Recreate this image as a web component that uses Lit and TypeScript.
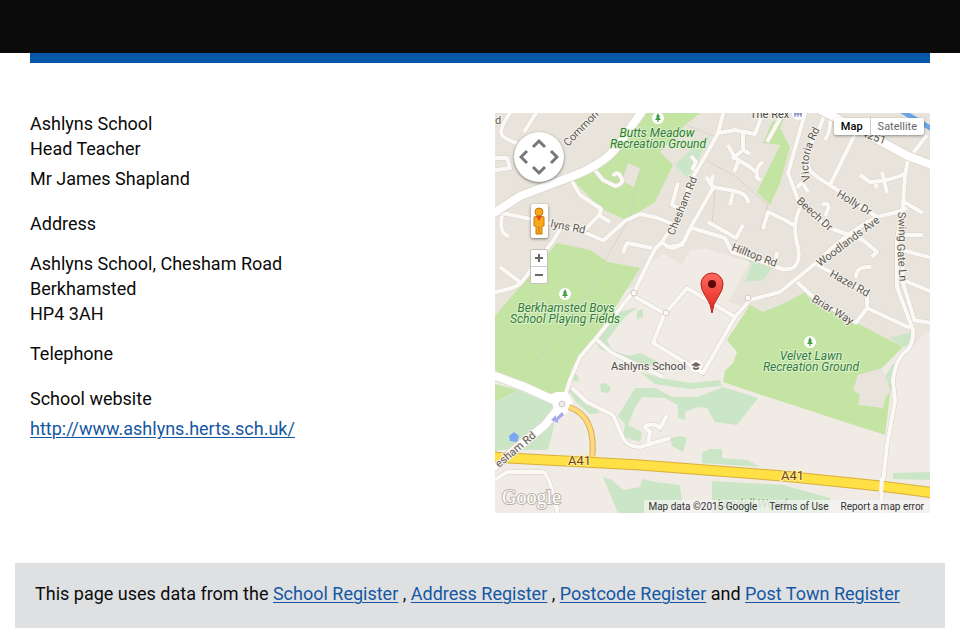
import { LitElement, html, svg, css } from "lit";
import { customElement } from "lit/decorators.js";

const PARKS = [
  "495,316 557,243 590,250 608,262 640,268 597,337 580,357 568,388 560,402 545,396 525,386 495,373",
  "495,384 518,390 495,402",
  "640,113 655,113 700,113 685,125 660,152 673,165 655,202 642,210 628,221 600,208 570,177 593,168 613,150 632,128",
  "772,122 785,117 780,128 790,147 780,183 770,205 757,192 780,145 763,143",
  "750,305 763,312 785,303 805,292 808,297 857,323 903,347 877,373 893,380 890,395 885,435 780,401 723,382 725,371 733,363 737,352 727,340",
];

const WOODS = [
  "518,390 556,406 553,431 548,450 500,450 495,452 495,402",
  "675,165 698,143 710,135 702,152 690,175 687,178",
  "738,253 747,258 757,262 772,268 763,280 745,282 752,264",
  "635,388 655,388 672,397 697,397 723,387 758,398 737,425 715,422 707,408 697,407 685,412 685,420 678,418 678,405 665,398 642,397 635,408 628,425 642,432 640,442 623,437 625,424 618,416",
  "568,390 573,388 593,404 600,413 590,414 576,402",
  "600,384 606,383 611,388 608,393 601,392",
  "638,307 625,317 607,340 612,351 630,356 640,353 665,365 662,368 635,362 600,349 596,342 620,312",
  "637,311 643,309 643,317 637,320",
  "670,438 680,436 687,438 683,452 672,446",
  "702,453 710,449 722,449 722,458 748,460 760,467 702,463",
  "603,477 612,480 623,490 640,487 642,479 655,482 680,485 682,502 660,513 618,513",
  "712,481 783,485 830,498 830,513 712,513",
  "893,473 930,472 930,480 893,479",
  "890,338 912,332 913,343 903,347",
  "883,380 892,365 902,355 895,370 890,385",
  "640,372 660,378 690,383 720,380 722,386 690,389 655,384",
  "570,368 578,376 580,382 570,380",
];

const LANES = [
  "M524 132L538 110M512 110Q498 130 502 135T517 143M490 158H507L510 168L490 171",
  "M570 178L580 195L601 209L600 214L583 232L545 222L507 214L490 213M600 216L610 222M584 232L604 241",
  "M502 215Q500 228 503 232T509 236M562 226L553 241L521 283Q515 289 490 293M500 267L521 283",
  "M593 168L603 180L615 186Q625 184 621 177T613 176",
  "M724 110L718 133L710 148L693 177L676 220L662 242L655 249L635 290L597 337L580 357L570 380L563 402",
  "M718 133L735 130L755 134L764 110M743 132V150L732 159M743 150L750 154",
  "M728 145L735 158L750 167L757 173V178L761 180M757 171Q758 164 763 162M738 162L734 172",
  "M691 156L696 162L692 170M706 177L713 187L735 191Q748 194 748 203M713 175L711 184M713 188L692 225L682 245L668 247L662 242M733 193L730 205",
  "M692 228L725 238L732 252L760 261L785 270M708 222L736 238L743 225M775 264L777 252",
  "M767 142L781 117M763 229L768 212L785 220L795 226",
  "M826 110L820 127Q803 155 809 168Q812 175 830 185L877 217L897 212L907 208",
  "M806 110L788 173L800 205L830 228L863 240L877 252L872 257M862 120L830 185M797 188L802 182L808 192M800 208Q792 225 797 243T793 268Q785 271 775 267",
  "M822 205Q833 200 825 216M877 217Q850 230 817 262L780 292L750 300L735 317L703 373L653 343L664 315L687 288L735 317M664 313L635 297M817 265L833 273L867 293V308L856 323M797 282L813 297L857 323M867 308L910 328",
  "M856 278Q855 266 871 267M830 110Q832 130 825 140M860 175L870 182Q892 181 906 173M882 172L887 193M875 182L877 188",
  "M927 135L908 160L905 175L903 205L897 240V287L913 330Q914 345 905 352T893 380L895 402L887 445L881 502L883 515",
  "M902 248L903 283L915 322M904 202L923 213M900 235H923M903 280L932 292M913 320L932 323M902 250L932 258",
  "M597 340L612 353L663 377M572 388L587 402L613 415L623 438Q627 447 640 447L670 438M648 445L650 431Q641 427 648 425T660 428L667 415",
  "M490 483L507 472H543Q550 475 558 515M623 253L627 243L652 248M668 247Q678 250 686 239",
  "M603 241L625 221L640 214L658 218L675 225M678 183L672 205L683 210M900 130L909 135",
];

interface Label { t: string; x: number; y: number; r: number; }
const STREETS: Label[] = [
  { t: "Common", x: 568, y: 147, r: -46 },
  { t: "lyns Rd", x: 550, y: 227, r: 11 },
  { t: "Chesham Rd", x: 674, y: 236, r: -68 },
  { t: "Hilltop Rd", x: 731, y: 250, r: 21 },
  { t: "Beech Dr", x: 796, y: 202, r: 42 },
  { t: "Holly Dr", x: 836, y: 196, r: 31 },
  { t: "Woodlands Ave", x: 820, y: 267, r: -37 },
  { t: "Hazel Rd", x: 829, y: 276, r: 29 },
  { t: "Briar Way", x: 811, y: 301, r: 31 },
  { t: "Swing", x: 898, y: 212, r: 88 },
  { t: "Gate Ln", x: 897, y: 244, r: 86 },
  { t: "esham Rd", x: 499, y: 468, r: -40 },
  { t: "4251", x: 861, y: 136, r: 20 },
  { t: "d", x: 495, y: 124, r: 0 },
];

@customElement("area-map")
export class AreaMap extends LitElement {
  static styles = css`
    :host { display: block; position: relative; height: 400px; overflow: hidden;
      font: 11px/14px Roboto, "Liberation Sans", sans-serif; }
    .canvas { display: block; width: 100%; height: 100%; }
    .home { fill: #e9e4db; }
    .park { fill: #c3e4a3; }
    .wood { fill: #cbe6c6; }
    .edge { fill: none; stroke: #d8d1c7; stroke-width: 5; }
    .lane { fill: none; stroke: #fbf9f5; stroke-width: 4; stroke-linejoin: round; }
    .trail { fill: none; stroke: #d2cbc0; stroke-width: 1; opacity: .7; }
    .main-edge { fill: none; stroke: #dfd9cf; stroke-width: 10; }
    .main { fill: none; stroke: #fff; stroke-width: 8; }
    .trunk-edge { fill: none; stroke: #d9ae3b; stroke-width: 11; }
    .trunk { fill: none; stroke: #ffe045; stroke-width: 9; }
    .street { fill: #5d5850; font-size: 11px; stroke: #f6f3ee; stroke-width: 2; paint-order: stroke; }
    .green { fill: #2f7d3b; font-size: 12px; font-style: italic; text-anchor: middle;
      stroke: #dff0cc; stroke-width: 2; paint-order: stroke; }
    .place { fill: #4a4744; font-size: 11px; stroke: #f6f3ee; stroke-width: 2; paint-order: stroke; }
    .route { fill: #744010; font-size: 13px; stroke: #fff0a0; stroke-width: 2; paint-order: stroke; }
    .brand { fill: #fff; font: 20px "Liberation Serif", serif; stroke: #b9b4ac; stroke-width: 2; paint-order: stroke; }
    .tools { position: absolute; left: 19px; top: 19px; display: flex; flex-direction: column; align-items: center; }
    button { display: block; margin: 0; padding: 0; border: 0; background: #fff; font: inherit; color: #666; }
    .pan { width: 50px; height: 50px; border-radius: 50%; box-shadow: 0 1px 3px rgb(0 0 0 / .5); }
    .person { width: 17px; height: 34px; margin-top: 22px; border-radius: 2px; box-shadow: 0 1px 3px rgb(0 0 0 / .5); }
    .zoom { display: flex; flex-direction: column; gap: 1px; margin-top: 11px; background: #ccc;
      border-radius: 2px; overflow: hidden; border: 1px solid #c4c0ba; }
    .zoom button { width: 16px; height: 16px; }
    .pan svg, .person svg, .zoom svg { display: block; margin: auto; }
    .kinds { position: absolute; top: 5px; right: 6px; display: flex; border-radius: 2px;
      box-shadow: 0 1px 3px rgb(0 0 0 / .4); background: #fff; }
    .kinds button { height: 17px; padding: 0 7px; background: none; }
    .kinds .on { color: #000; font-weight: 500; border-right: 1px solid #ccc; }
    .credit { position: absolute; right: 0; bottom: 0; display: flex; gap: 12px; height: 13px; line-height: 13px;
      padding: 0 6px 0 4px; background: rgb(245 245 245 / .7); font-size: 10px; color: #333; }
    .credit a { color: inherit; text-decoration: none; }
  `;

  render() {
    return html`
      <svg class="canvas" viewBox="495 113 435 400" preserveAspectRatio="xMidYMid slice" role="img" aria-label="Map of Ashlyns School">
        <rect x="495" y="113" width="435" height="400" fill="#f0ebe4" />
        <path class="home" d="M495 113H930V330Q920 336 914 346L903 347L857 323L763 312L728 302L750 262L735 258L718 252L705 248L690 250L682 265L663 253L646 267L638 285L600 300L495 320Z" />
        ${PARKS.map((p) => svg`<polygon class="park" points=${p} />`)}
        ${WOODS.map((p) => svg`<polygon class="wood" points=${p} />`)}
        <path class="home" d="M628 163L640 168L634 187L622 181ZM858 375L853 390L860 395L858 405L883 408L885 398L891 391L882 368Z" />
        <path class="trail" d="M608 262L570 320L522 378M640 172L628 221L604 262M687 125L716 137M707 161L735 176L768 205L760 230M715 190L712 225" />
        <path class="edge" d=${LANES.join("")} />
        <path class="lane" d=${LANES.join("")} />
        <path class="main-edge" d="M488 217L520 196L565 179Q602 166 616 148L646 106M812 106L856 128L908 156L935 166M490 374L525 387L562 404L545 425L490 470" />
        <path class="main" d="M488 217L520 196L565 179Q602 166 616 148L646 106M812 106L856 128L908 156L935 166M490 374L525 387L562 404L545 425L490 470" />
        <path d="M545 397L556 392H567L573 402L567 413L553 420L553 405Z" fill="#fff" />
        <path d="M900 110L932 129" fill="none" stroke="#6ba4ea" stroke-width="5" />
        <path d="M569 407Q597 416 592 460" fill="none" stroke="#d6ac58" stroke-width="6" />
        <path d="M569 407Q597 416 592 460" fill="none" stroke="#ffda7c" stroke-width="4" />
        <path d="M586 461L592 454L606 461Z" fill="#ffda7c" />
        <path class="trunk-edge" d="M490 457L640 465L783 476L880 486L935 493" />
        <path class="trunk" d="M490 457L640 465L783 476L880 486L935 493" />
        <path d="M882 478L881 493" stroke="#fbf9f5" stroke-width="4" />
        <path d="M551 420L556 415L556 418L562 412L564 415L558 420L558 423Z" fill="#a5a8ea" />
        <path d="M509 436L514 432L519 436L517 442L510 441Z" fill="#79a7f4" />
        <circle cx="562" cy="404" r="3" fill="#f0ebe4" stroke="#d0cac0" />
        <g fill="#fbf9f5" stroke="#d3ccc2"><circle cx="748" cy="298" r="3" /><circle cx="666" cy="313" r="3" /><circle cx="634" cy="293" r="3" /></g>
        ${[[658, 118], [565, 294], [810, 342]].map(([x, y]) => svg`
          <circle cx=${x} cy=${y} r="6" fill="#fff" />
          <path transform="translate(${x} ${y})" d="M0-5L-2-1H-1L-3 2H-.6V4H.6V2H3L1-1H2Z" fill="#43a047" />`)}
        <text class="green" x="657" y="137">Butts Meadow</text>
        <text class="green" x="658" y="148">Recreation Ground</text>
        <text class="green" x="566" y="312">Berkhamsted Boys</text>
        <text class="green" x="565" y="323">School Playing Fields</text>
        <text class="green" x="811" y="360">Velvet Lawn</text>
        <text class="green" x="811" y="371">Recreation Ground</text>
        <text class="green" x="752" y="508" opacity=".6">Loadell Wood</text>
        ${STREETS.map((l) => svg`<text class="street" transform="translate(${l.x} ${l.y}) rotate(${l.r})">${l.t}</text>`)}
        <path id="victoria" d="M811 180Q802 160 823 124" fill="none" />
        <text class="street"><textPath href="#victoria">Victoria Rd</textPath></text>
        <text class="place" x="611" y="370">Ashlyns School</text>
        <text class="place" x="750" y="118">The Rex</text>
        <circle cx="798" cy="114" r="6" fill="#fff" />
        <path d="M795 112V117M798 112V117M801 112V117M794 114H802" stroke="#6570ae" fill="none" />
        <circle cx="696" cy="366" r="6" fill="#fff" />
        <path d="M691 365L696 362L701 365L696 367ZM693 367V369Q696 371 699 369V367L696 368ZM700 365V369" fill="#756660" />
        <text class="route" x="568" y="465">A41</text>
        <text class="route" x="781" y="480">A41</text>
        <text class="brand" x="502" y="504">Google</text>
        <defs><linearGradient id="red" x2="0" y2="1"><stop stop-color="#ff6b60" /><stop offset="1" stop-color="#e2231a" /></linearGradient></defs>
        <path d="M712 313Q711 304 706 297Q701 290 701 284A11 11 0 0 1 723 284Q723 290 718 297Q713 304 712 313Z" fill="url(#red)" stroke="#b3211b" />
        <circle cx="712" cy="284" r="4" fill="#5c0907" />
      </svg>
      <div class="tools">
        <button class="pan" aria-label="Pan"><svg width="40" height="40" viewBox="0 0 40 40"><path d="M14 10L20 4L26 10M14 30L20 36L26 30M8 14L2 20L8 26M32 14L38 20L32 26" fill="none" stroke="#777" stroke-width="3" /></svg></button>
        <button class="person" aria-label="Street View"><svg width="16" height="30" viewBox="0 0 16 30"><circle cx="8" cy="6" r="4" fill="#f9a51a" stroke="#c77a0c" /><path d="M3 11Q8 9 13 11V20H11V28H5V20H3Z" fill="#fba919" stroke="#c77a0c" /><path d="M5 10H11L8 15Z" fill="#e9491e" /><path d="M8 20V28" stroke="#c77a0c" /></svg></button>
        <div class="zoom">
          <button aria-label="Zoom in"><svg width="10" height="10" viewBox="0 0 10 10"><path d="M1 5H9M5 1V9" stroke="#666" stroke-width="2" /></svg></button>
          <button aria-label="Zoom out"><svg width="10" height="10" viewBox="0 0 10 10"><path d="M1 5H9" stroke="#666" stroke-width="2" /></svg></button>
        </div>
      </div>
      <div class="kinds"><button class="on">Map</button><button>Satellite</button></div>
      <div class="credit"><span>Map data ©2015 Google</span><a href="#terms">Terms of Use</a><a href="#report">Report a map error</a></div>
    `;
  }
}

@customElement("app-root")
export class AppRoot extends LitElement {
  static styles = css`
    :host { display: block; color: #0b0b0b; background: #fff; font: 18px/25px Roboto, "Noto Sans", sans-serif; }
    .top { height: 53px; background: #0b0b0b; }
    .stripe { height: 10px; margin: 0 30px; background: #0557a8; }
    main { display: grid; grid-template-columns: 1fr 1fr; gap: 30px; margin: 50px 30px; }
    .details { margin-top: -2px; }
    p, h1, h2 { margin: 0; font: inherit; }
    .name { margin-top: 5px; }
    .wide { margin-top: 20px; }
    .part { margin-top: 15px; }
    a { color: #1557a2; text-decoration: underline; text-underline-offset: 2px; text-decoration-thickness: 1px; }
    address { font-style: normal; }
    footer { margin: 0 15px; padding: 18px 20px 22px; background: #dee0e2; }
  `;

  render() {
    return html`
      <header class="top"></header>
      <div class="stripe"></div>
      <main>
        <section class="details">
          <h1>Ashlyns School</h1>
          <h2>Head Teacher</h2>
          <p class="name">Mr James Shapland</p>
          <h2 class="wide">Address</h2>
          <address class="part">Ashlyns School, Chesham Road<br />Berkhamsted<br />HP4 3AH</address>
          <h2 class="part">Telephone</h2>
          <h2 class="wide">School website</h2>
          <p class="name"><a href="http://www.ashlyns.herts.sch.uk/">http://www.ashlyns.herts.sch.uk/</a></p>
        </section>
        <area-map></area-map>
      </main>
      <footer>This page uses data from the <a href="#school">School Register</a> , <a href="#address">Address Register</a> , <a href="#postcode">Postcode Register</a> and <a href="#town">Post Town Register</a></footer>
    `;
  }
}
